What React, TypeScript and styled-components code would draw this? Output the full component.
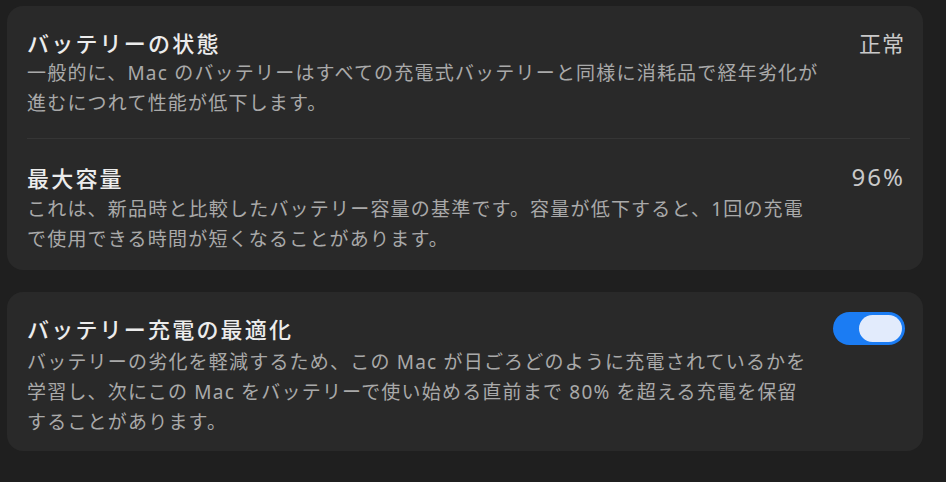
import React from "react";
import styled, { createGlobalStyle } from "styled-components";

const Global = createGlobalStyle`
  html, body { margin: 0; padding: 0; background: #1f1f1f; }
  body {
    font-family: "Noto Sans", "Noto Sans CJK JP", sans-serif;
    -webkit-font-smoothing: antialiased;
  }
`;

const Page = styled.div`
  width: 946px;
  height: 482px;
  box-sizing: border-box;
  padding: 6px 23px 0 7px;
  display: flex;
  flex-direction: column;
  gap: 22px;
  background: #1f1f1f;
  overflow: hidden;
`;

const Card = styled.section`
  background: #292929;
  border-radius: 16px;
  padding: 0 18px 0 20px;
  display: flex;
  flex-direction: column;
`;

const Row = styled.div<{ $pt: number; $pb: number }>`
  display: flex;
  align-items: flex-start;
  justify-content: space-between;
  padding: ${(p) => p.$pt}px 0 ${(p) => p.$pb}px;
`;

const Separator = styled.div`
  height: 1px;
  background: #353535;
  margin-right: -5px;
`;

const TextCol = styled.div<{ $gap: number }>`
  display: flex;
  flex-direction: column;
  gap: ${(p) => p.$gap}px;
`;

const Title = styled.div`
  color: #ececec;
  font-family: "Noto Sans CJK JP", sans-serif;
  font-size: 22px;
  line-height: 30px;
  font-weight: 500;
  letter-spacing: 2.2px;
`;

const Desc = styled.div`
  color: #a9a9a9;
  font-size: 19px;
  line-height: 30px;
  letter-spacing: 1.2px;
  white-space: nowrap;
`;

const Value = styled.div<{ $latin?: boolean }>`
  color: #c9c9c9;
  font-family: ${(p) =>
    p.$latin ? '"Noto Sans", sans-serif' : '"Noto Sans CJK JP", sans-serif'};
  font-size: ${(p) => (p.$latin ? 24 : 22)}px;
  line-height: 30px;
  letter-spacing: ${(p) => (p.$latin ? 2 : 1)}px;
`;

const Toggle = styled.div`
  width: 72px;
  height: 33px;
  border-radius: 17px;
  background: #1b7cf3;
  box-sizing: border-box;
  padding: 3px 3px;
  display: flex;
  justify-content: flex-end;
  margin-top: -1px;
`;

const Knob = styled.div`
  width: 43px;
  height: 27px;
  border-radius: 14px;
  background: #e2ebfc;
`;

export default function App() {
  return (
    <>
      <Global />
      <Page>
        <Card>
          <Row $pt={21} $pb={20}>
            <TextCol $gap={1}>
              <Title>バッテリーの状態</Title>
              <Desc>
                一般的に、Mac のバッテリーはすべての充電式バッテリーと同様に消耗品で経年劣化が
                <br />
                進むにつれて性能が低下します。
              </Desc>
            </TextCol>
            <Value>正常</Value>
          </Row>
          <Separator />
          <Row $pt={23} $pb={16}>
            <TextCol $gap={2}>
              <Title>最大容量</Title>
              <Desc>
                これは、新品時と比較したバッテリー容量の基準です。容量が低下すると、1回の充電
                <br />
                で使用できる時間が短くなることがあります。
              </Desc>
            </TextCol>
            <Value $latin>96%</Value>
          </Row>
        </Card>
        <Card>
          <Row $pt={21} $pb={14}>
            <TextCol $gap={4}>
              <Title>バッテリー充電の最適化</Title>
              <Desc>
                バッテリーの劣化を軽減するため、この Mac が日ごろどのように充電されているかを
                <br />
                学習し、次にこの Mac をバッテリーで使い始める直前まで 80% を超える充電を保留
                <br />
                することがあります。
              </Desc>
            </TextCol>
            <Toggle>
              <Knob />
            </Toggle>
          </Row>
        </Card>
      </Page>
    </>
  );
}
